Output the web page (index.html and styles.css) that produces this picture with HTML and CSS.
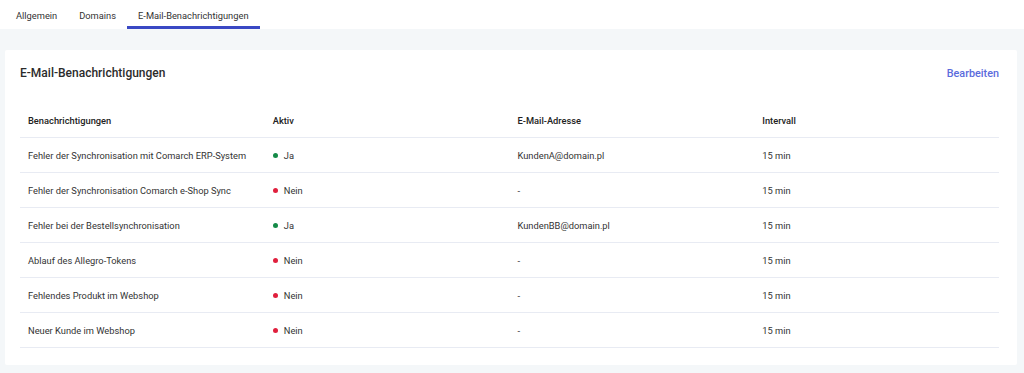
FILE: index.html
```html
<!DOCTYPE html>
<html lang="de">
<head>
<meta charset="utf-8">
<link rel="stylesheet" href="styles.css">
</head>
<body>
<nav class="tabs">
  <a class="tab">Allgemein</a>
  <a class="tab">Domains</a>
  <a class="tab active">E-Mail-Benachrichtigungen</a>
</nav>
<main class="page">
  <section class="card">
    <header class="card-head">
      <h2 class="card-title">E-Mail-Benachrichtigungen</h2>
      <a class="edit">Bearbeiten</a>
    </header>
    <table class="grid">
      <thead>
        <tr><th>Benachrichtigungen</th><th>Aktiv</th><th>E-Mail-Adresse</th><th>Intervall</th></tr>
      </thead>
      <tbody>
        <tr><td>Fehler der Synchronisation mit Comarch ERP-System</td><td><span class="dot on"></span>Ja</td><td>KundenA@domain.pl</td><td>15 min</td></tr>
        <tr><td>Fehler der Synchronisation Comarch e-Shop Sync</td><td><span class="dot off"></span>Nein</td><td>-</td><td>15 min</td></tr>
        <tr><td>Fehler bei der Bestellsynchronisation</td><td><span class="dot on"></span>Ja</td><td>KundenBB@domain.pl</td><td>15 min</td></tr>
        <tr><td>Ablauf des Allegro-Tokens</td><td><span class="dot off"></span>Nein</td><td>-</td><td>15 min</td></tr>
        <tr><td>Fehlendes Produkt im Webshop</td><td><span class="dot off"></span>Nein</td><td>-</td><td>15 min</td></tr>
        <tr><td>Neuer Kunde im Webshop</td><td><span class="dot off"></span>Nein</td><td>-</td><td>15 min</td></tr>
      </tbody>
    </table>
  </section>
</main>
</body>
</html>
```

FILE: styles.css
```css
html, body {
  margin: 0;
  padding: 0;
  background: #ffffff;
  font-family: Roboto, "Liberation Sans", Arial, sans-serif;
  color: #2b2b2b;
}
.tabs {
  display: flex;
  height: 29px;
  padding-left: 5px;
  background: #fff;
}
.tab {
  display: block;
  padding: 5px 11px 0;
  font-size: 9.3px;
  line-height: 21px;
  color: #333;
  border-bottom: 3px solid transparent;
  cursor: pointer;
}
.tab.active {
  border-bottom-color: #3a48c4;
}
.page {
  background: #f4f7f9;
  padding: 21px 7px 8px 5px;
}
.card {
  background: #fff;
  border-radius: 2px;
  padding: 14px 18px 17px 15px;
}
.card-head {
  display: flex;
  justify-content: space-between;
  align-items: center;
  height: 18px;
}
.card-title {
  margin: 0;
  font-size: 12px;
  font-weight: 500;
  color: #2b2b2b;
}
.edit {
  font-size: 10.8px;
  font-weight: 500;
  color: #5a6bdc;
  cursor: pointer;
}
.grid {
  width: 100%;
  margin-top: 21px;
  border-collapse: collapse;
  table-layout: fixed;
  font-size: 9.3px;
}
.grid th {
  text-align: left;
  font-weight: 500;
  color: #222;
  height: 34px;
  padding: 0 8px;
  border-bottom: 1px solid #e8ebf3;
}
.grid td {
  height: 34px;
  padding: 0 8px;
  border-bottom: 1px solid #e8ebf3;
  color: #333;
}
.dot {
  display: inline-block;
  width: 5px;
  height: 5px;
  border-radius: 50%;
  margin-right: 6px;
  vertical-align: 1px;
}
.dot.on { background: #148a47; }
.dot.off { background: #e01f3d; }
```
